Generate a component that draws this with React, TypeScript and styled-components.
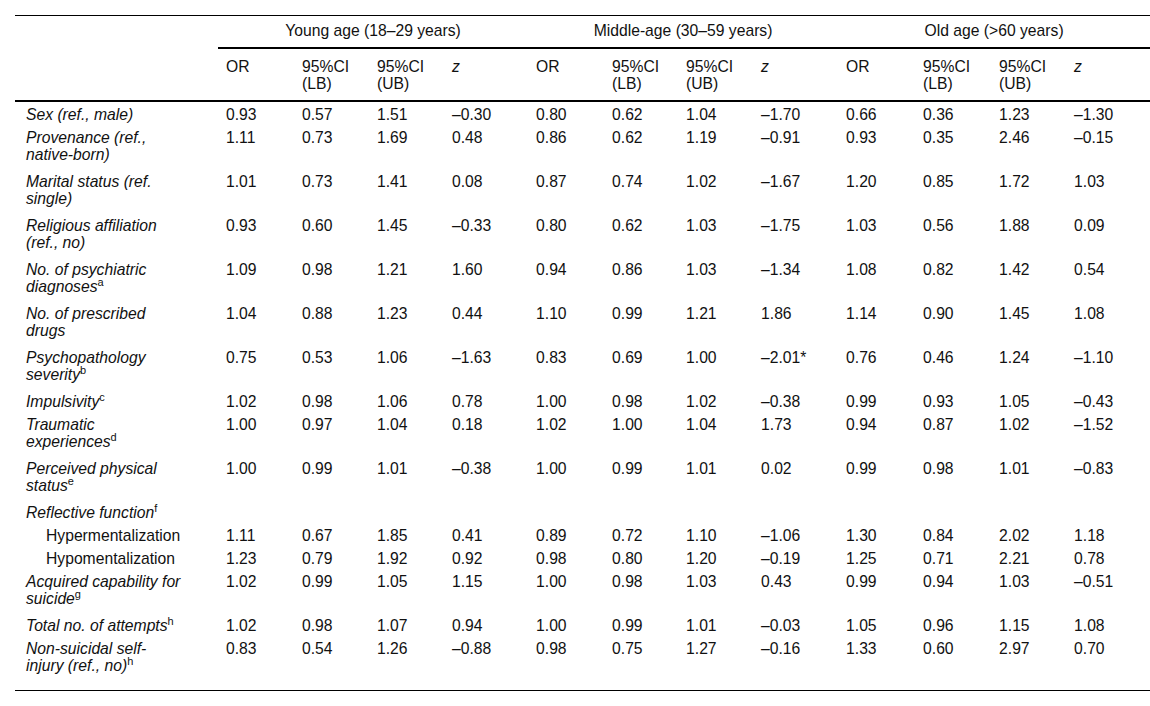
import React from 'react';
import styled, { createGlobalStyle } from 'styled-components';

// --- Data ---
type Row = {
  label: string[];
  sup?: string;
  sub?: boolean;
  values: string[];
};

const groups = ['Young age (18–29 years)', 'Middle-age (30–59 years)', 'Old age (>60 years)'];

const rows: Row[] = [
  { label: ['Sex (ref., male)'], values: ['0.93', '0.57', '1.51', '–0.30', '0.80', '0.62', '1.04', '–1.70', '0.66', '0.36', '1.23', '–1.30'] },
  { label: ['Provenance (ref.,', 'native-born)'], values: ['1.11', '0.73', '1.69', '0.48', '0.86', '0.62', '1.19', '–0.91', '0.93', '0.35', '2.46', '–0.15'] },
  { label: ['Marital status (ref.', 'single)'], values: ['1.01', '0.73', '1.41', '0.08', '0.87', '0.74', '1.02', '–1.67', '1.20', '0.85', '1.72', '1.03'] },
  { label: ['Religious affiliation', '(ref., no)'], values: ['0.93', '0.60', '1.45', '–0.33', '0.80', '0.62', '1.03', '–1.75', '1.03', '0.56', '1.88', '0.09'] },
  { label: ['No. of psychiatric', 'diagnoses'], sup: 'a', values: ['1.09', '0.98', '1.21', '1.60', '0.94', '0.86', '1.03', '–1.34', '1.08', '0.82', '1.42', '0.54'] },
  { label: ['No. of prescribed', 'drugs'], values: ['1.04', '0.88', '1.23', '0.44', '1.10', '0.99', '1.21', '1.86', '1.14', '0.90', '1.45', '1.08'] },
  { label: ['Psychopathology', 'severity'], sup: 'b', values: ['0.75', '0.53', '1.06', '–1.63', '0.83', '0.69', '1.00', '–2.01*', '0.76', '0.46', '1.24', '–1.10'] },
  { label: ['Impulsivity'], sup: 'c', values: ['1.02', '0.98', '1.06', '0.78', '1.00', '0.98', '1.02', '–0.38', '0.99', '0.93', '1.05', '–0.43'] },
  { label: ['Traumatic', 'experiences'], sup: 'd', values: ['1.00', '0.97', '1.04', '0.18', '1.02', '1.00', '1.04', '1.73', '0.94', '0.87', '1.02', '–1.52'] },
  { label: ['Perceived physical', 'status'], sup: 'e', values: ['1.00', '0.99', '1.01', '–0.38', '1.00', '0.99', '1.01', '0.02', '0.99', '0.98', '1.01', '–0.83'] },
  { label: ['Reflective function'], sup: 'f', values: [] },
  { label: ['Hypermentalization'], sub: true, values: ['1.11', '0.67', '1.85', '0.41', '0.89', '0.72', '1.10', '–1.06', '1.30', '0.84', '2.02', '1.18'] },
  { label: ['Hypomentalization'], sub: true, values: ['1.23', '0.79', '1.92', '0.92', '0.98', '0.80', '1.20', '–0.19', '1.25', '0.71', '2.21', '0.78'] },
  { label: ['Acquired capability for', 'suicide'], sup: 'g', values: ['1.02', '0.99', '1.05', '1.15', '1.00', '0.98', '1.03', '0.43', '0.99', '0.94', '1.03', '–0.51'] },
  { label: ['Total no. of attempts'], sup: 'h', values: ['1.02', '0.98', '1.07', '0.94', '1.00', '0.99', '1.01', '–0.03', '1.05', '0.96', '1.15', '1.08'] },
  { label: ['Non-suicidal self-', 'injury (ref., no)'], sup: 'h', values: ['0.83', '0.54', '1.26', '–0.88', '0.98', '0.75', '1.27', '–0.16', '1.33', '0.60', '2.97', '0.70'] },
];

// column widths: label, then 3 groups of OR / LB / UB / z
const colWidths = [203, 76, 75, 75, 84, 76, 74, 75, 85, 77, 76, 75, 84];

// --- Components ---
const LabelCell: React.FC<{ row: Row; last: boolean }> = ({ row, last }) => (
  <Label $sub={row.sub} $tall={row.label.length > 1} $last={last}>
    {row.label.map((line, i) => (
      <React.Fragment key={i}>
        {i > 0 && <br />}
        {line}
      </React.Fragment>
    ))}
    {row.sup && <Sup>{row.sup}</Sup>}
  </Label>
);

const App = () => {
  const blanks = Array.from({ length: 12 }, () => '');

  return (
    <Page>
      <GlobalStyle />
      <Table>
        <colgroup>
          {colWidths.map((w, i) => (
            <col key={i} style={{ width: w }} />
          ))}
        </colgroup>
        <thead>
          <tr>
            <Corner rowSpan={2} />
            {groups.map((g) => (
              <GroupHead key={g} colSpan={4}>
                {g}
              </GroupHead>
            ))}
          </tr>
          <tr>
            {groups.map((g) => (
              <React.Fragment key={g}>
                <ColHead>OR</ColHead>
                <ColHead>
                  95%CI
                  <br />
                  (LB)
                </ColHead>
                <ColHead>
                  95%CI
                  <br />
                  (UB)
                </ColHead>
                <ColHead $italic>z</ColHead>
              </React.Fragment>
            ))}
          </tr>
        </thead>
        <tbody>
          {rows.map((row, r) => {
            const last = r === rows.length - 1;
            const tall = row.label.length > 1;
            const values = row.values.length ? row.values : blanks;
            return (
              <tr key={r}>
                <LabelCell row={row} last={last} />
                {values.map((v, c) => (
                  <Value key={c} $tall={tall} $last={last}>
                    {v}
                  </Value>
                ))}
              </tr>
            );
          })}
        </tbody>
      </Table>
    </Page>
  );
};

export default App;

// --- Styles ---
const GlobalStyle = createGlobalStyle`
  html, body {
    margin: 0;
    padding: 0;
    background: #fff;
  }
  body {
    font-family: "Liberation Sans", Arial, Helvetica, sans-serif;
    color: #111;
  }
`;

const Page = styled.div`
  padding: 15px 0 0 15px;
`;

const Table = styled.table`
  width: 1135px;
  table-layout: fixed;
  border-collapse: separate;
  border-spacing: 0;
  border-top: 1px solid #000;
  border-bottom: 1px solid #000;
  font-size: 15.7px;
  line-height: 17px;
`;

const Corner = styled.th`
  border-bottom: 2px solid #000;
  padding: 0;
`;

const GroupHead = styled.th`
  font-weight: normal;
  text-align: center;
  padding: 6px 0 8px;
  border-bottom: 2px solid #000;
  white-space: nowrap;
`;

const ColHead = styled.th<{ $italic?: boolean }>`
  font-weight: normal;
  font-style: ${(p) => (p.$italic ? 'italic' : 'normal')};
  text-align: left;
  vertical-align: top;
  padding: 9px 0 8px 8px;
  border-bottom: 2px solid #000;
  white-space: nowrap;
`;

const Label = styled.td<{ $sub?: boolean; $tall: boolean; $last: boolean }>`
  font-style: ${(p) => (p.$sub ? 'normal' : 'italic')};
  vertical-align: top;
  white-space: nowrap;
  padding: 4px 0 ${(p) => (p.$last ? 16 : p.$tall ? 6 : 2)}px ${(p) => (p.$sub ? 31 : 11)}px;
`;

const Sup = styled.sup`
  font-size: 11px;
  line-height: 0;
  font-style: normal;
  vertical-align: 6px;
`;

const Value = styled.td<{ $tall: boolean; $last: boolean }>`
  vertical-align: top;
  white-space: nowrap;
  padding: 4px 0 ${(p) => (p.$last ? 16 : p.$tall ? 6 : 2)}px 8px;
`;
